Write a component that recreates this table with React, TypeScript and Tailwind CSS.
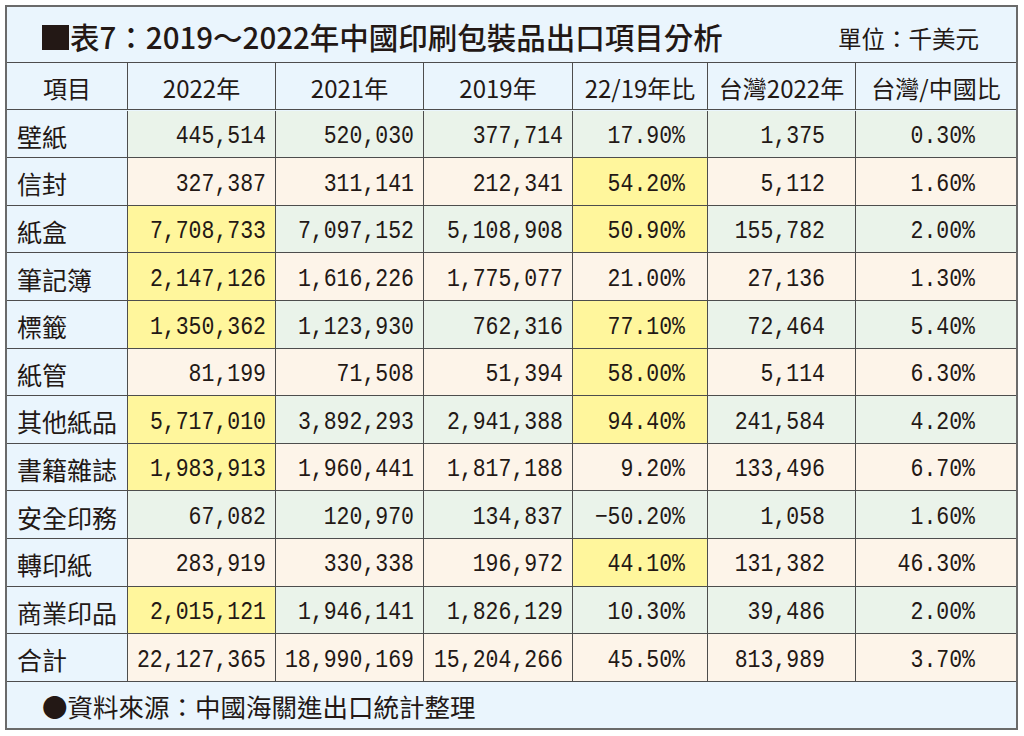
const cjk = "font-['Noto_Sans_CJK_TC','Noto_Sans',sans-serif]"
const mono = "font-['Liberation_Mono','DejaVu_Sans_Mono',monospace]"

const headers = ['項目', '2022年', '2021年', '2019年', '22/19年比', '台灣2022年', '台灣/中國比']

const rows: string[][] = [
  ['壁紙', '445,514', '520,030', '377,714', '17.90%', '1,375', '0.30%'],
  ['信封', '327,387', '311,141', '212,341', '54.20%', '5,112', '1.60%'],
  ['紙盒', '7,708,733', '7,097,152', '5,108,908', '50.90%', '155,782', '2.00%'],
  ['筆記簿', '2,147,126', '1,616,226', '1,775,077', '21.00%', '27,136', '1.30%'],
  ['標籤', '1,350,362', '1,123,930', '762,316', '77.10%', '72,464', '5.40%'],
  ['紙管', '81,199', '71,508', '51,394', '58.00%', '5,114', '6.30%'],
  ['其他紙品', '5,717,010', '3,892,293', '2,941,388', '94.40%', '241,584', '4.20%'],
  ['書籍雜誌', '1,983,913', '1,960,441', '1,817,188', '9.20%', '133,496', '6.70%'],
  ['安全印務', '67,082', '120,970', '134,837', '−50.20%', '1,058', '1.60%'],
  ['轉印紙', '283,919', '330,338', '196,972', '44.10%', '131,382', '46.30%'],
  ['商業印品', '2,015,121', '1,946,141', '1,826,129', '10.30%', '39,486', '2.00%'],
  ['合計', '22,127,365', '18,990,169', '15,204,266', '45.50%', '813,989', '3.70%'],
]

// cells highlighted in yellow, as "row-col"
const yellow = new Set([
  '2-1', '3-1', '4-1', '6-1', '7-1', '10-1',
  '1-4', '2-4', '4-4', '5-4', '6-4', '9-4',
])

const padRight = ['', 'pr-[9px]', 'pr-[9px]', 'pr-[9px]', 'pr-[22px]', 'pr-[30px]', 'pr-[41px]']

function cellBg(r: number, c: number) {
  if (c === 0) return 'bg-[#eaf5fd]'
  if (yellow.has(`${r}-${c}`)) return 'bg-[#fff69c]'
  return r % 2 === 0 ? 'bg-[#eaf3ea]' : 'bg-[#fdf4e9]'
}

export default function App() {
  return (
    <div className="w-[1024px] h-[736px] bg-white pt-[5px] pl-[5px] text-[#231815]">
      <div className="w-[1013px] h-[725px] border-2 border-[#6a6a6a] bg-[#eaf5fd] flex flex-col">
        <div className="h-[56px] flex items-center justify-between pl-[35px] pr-[37px] pt-[5px] border-b border-[#4d4d4d]">
          <h1 className={`${cjk} text-[29.5px] font-medium leading-none flex items-center`}>
            <span className="inline-block w-[27px] h-[25px] bg-[#231815] mr-[1px]" />
            表7：2019～2022年中國印刷包裝品出口項目分析
          </h1>
          <span className={`${cjk} text-[23.5px] leading-none pt-[3px]`}>單位：千美元</span>
        </div>

        <div className="grid grid-cols-[121px_148px_148px_149px_135px_148px_160px] auto-rows-[47.6px]">
          {headers.map((h, c) => (
            <div
              key={h}
              className={`${cjk} h-[47px] flex items-center justify-center text-[24px] leading-none pt-[3px] border-b border-[#4d4d4d] ${c < 6 ? 'border-r' : ''}`}
            >
              {h}
            </div>
          ))}
          {rows.map((row, r) =>
            row.map((v, c) => (
              <div
                key={`${r}-${c}`}
                className={`${cellBg(r, c)} flex items-center border-b border-[#4d4d4d] ${c < 6 ? 'border-r' : ''} ${
                  c === 0 ? 'justify-start pl-[10px]' : `justify-end ${padRight[c]}`
                }`}
              >
                {c === 0 ? (
                  <span className={`${cjk} text-[25px] leading-none pt-[5px]`}>{v}</span>
                ) : (
                  <span className={`${mono} inline-block text-[21.5px] leading-none pt-[6px] scale-y-[1.18]`}>{v}</span>
                )}
              </div>
            ))
          )}
        </div>

        <div className="flex-1 flex items-center pl-[35px]">
          <span className={`${cjk} text-[25.5px] leading-none pt-[2px]`}>●資料來源：中國海關進出口統計整理</span>
        </div>
      </div>
    </div>
  )
}
